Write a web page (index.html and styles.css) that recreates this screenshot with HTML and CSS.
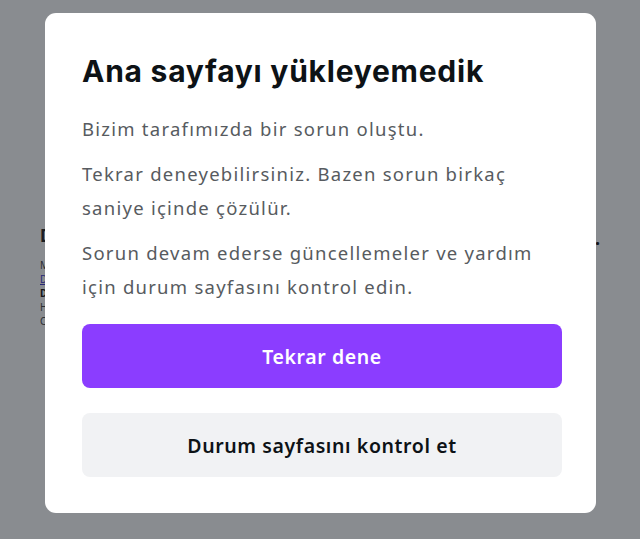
FILE: index.html
```html
<!DOCTYPE html>
<html lang="tr">
<head>
<meta charset="utf-8">
<link rel="stylesheet" href="styles.css">
</head>
<body>
<div class="page">
  <div class="column">
    <h2 class="bg-title">Durum</h2>
    <p class="bg-line">Merhaba</p>
    <p class="bg-line bg-link">Destek</p>
    <p class="bg-line bg-bold">Durum</p>
    <p class="bg-line">Hata</p>
    <p class="bg-line">Canva</p>
  </div>
  <span class="bg-dot">.</span>
</div>
<div class="overlay"></div>
<div class="modal" role="dialog">
  <h1 class="title">Ana sayfayı yükleyemedik</h1>
  <p class="text">Bizim tarafımızda bir sorun oluştu.</p>
  <p class="text">Tekrar deneyebilirsiniz. Bazen sorun birkaç saniye içinde çözülür.</p>
  <p class="text">Sorun devam ederse güncellemeler ve yardım için durum sayfasını kontrol edin.</p>
  <div class="actions">
    <button class="btn btn-primary">Tekrar dene</button>
    <button class="btn btn-secondary">Durum sayfasını kontrol et</button>
  </div>
</div>
</body>
</html>
```
FILE: styles.css
```css
* { box-sizing: border-box; }
html, body { margin: 0; padding: 0; }
body {
  width: 640px;
  height: 539px;
  overflow: hidden;
  background: #ffffff;
  font-family: "Noto Sans", "Open Sans", sans-serif;
  position: relative;
}
.page {
  width: 640px;
  height: 539px;
  padding: 226px 0 0 40px;
}
.column { width: 120px; }
.bg-title {
  margin: 0 0 12px;
  font-size: 17px;
  font-weight: 700;
  color: #222;
  line-height: 20px;
}
.bg-line {
  margin: 0;
  font-size: 10px;
  line-height: 14px;
  color: #444;
}
.bg-link { color: #3a35c8; text-decoration: underline; }
.bg-bold { font-weight: 700; color: #111; }
.bg-dot {
  position: absolute;
  left: 595px;
  top: 226px;
  font-size: 18px;
  font-weight: 700;
  color: #111;
}
.overlay {
  position: absolute;
  inset: 0;
  background: rgba(20, 26, 34, 0.5);
}
.modal {
  position: absolute;
  left: 45px;
  top: 13px;
  width: 551px;
  height: 500px;
  background: #ffffff;
  border-radius: 11px;
  padding: 40px 35px 36px 37px;
  display: flex;
  flex-direction: column;
}
.title {
  margin: 0 0 23px;
  font-family: "Inter", "Lato", sans-serif;
  font-weight: 700;
  font-size: 30px;
  line-height: 36px;
  color: #0d1216;
  letter-spacing: 0.75px;
}
.text {
  margin: 0 0 11px;
  font-size: 18.5px;
  line-height: 34px;
  color: #575b60;
  letter-spacing: 1.25px;
}
.actions {
  margin-top: auto;
  display: flex;
  flex-direction: column;
  gap: 25px;
}
.btn {
  height: 64px;
  border: 0;
  border-radius: 8px;
  font-family: "Noto Sans", "Open Sans", sans-serif;
  font-size: 19.5px;
  font-weight: 600;
  letter-spacing: 0.6px;
  width: 480px;
}
.btn-primary { background: #8b3dff; color: #ffffff; }
.btn-secondary { background: #f1f2f4; color: #0d1216; }
```
